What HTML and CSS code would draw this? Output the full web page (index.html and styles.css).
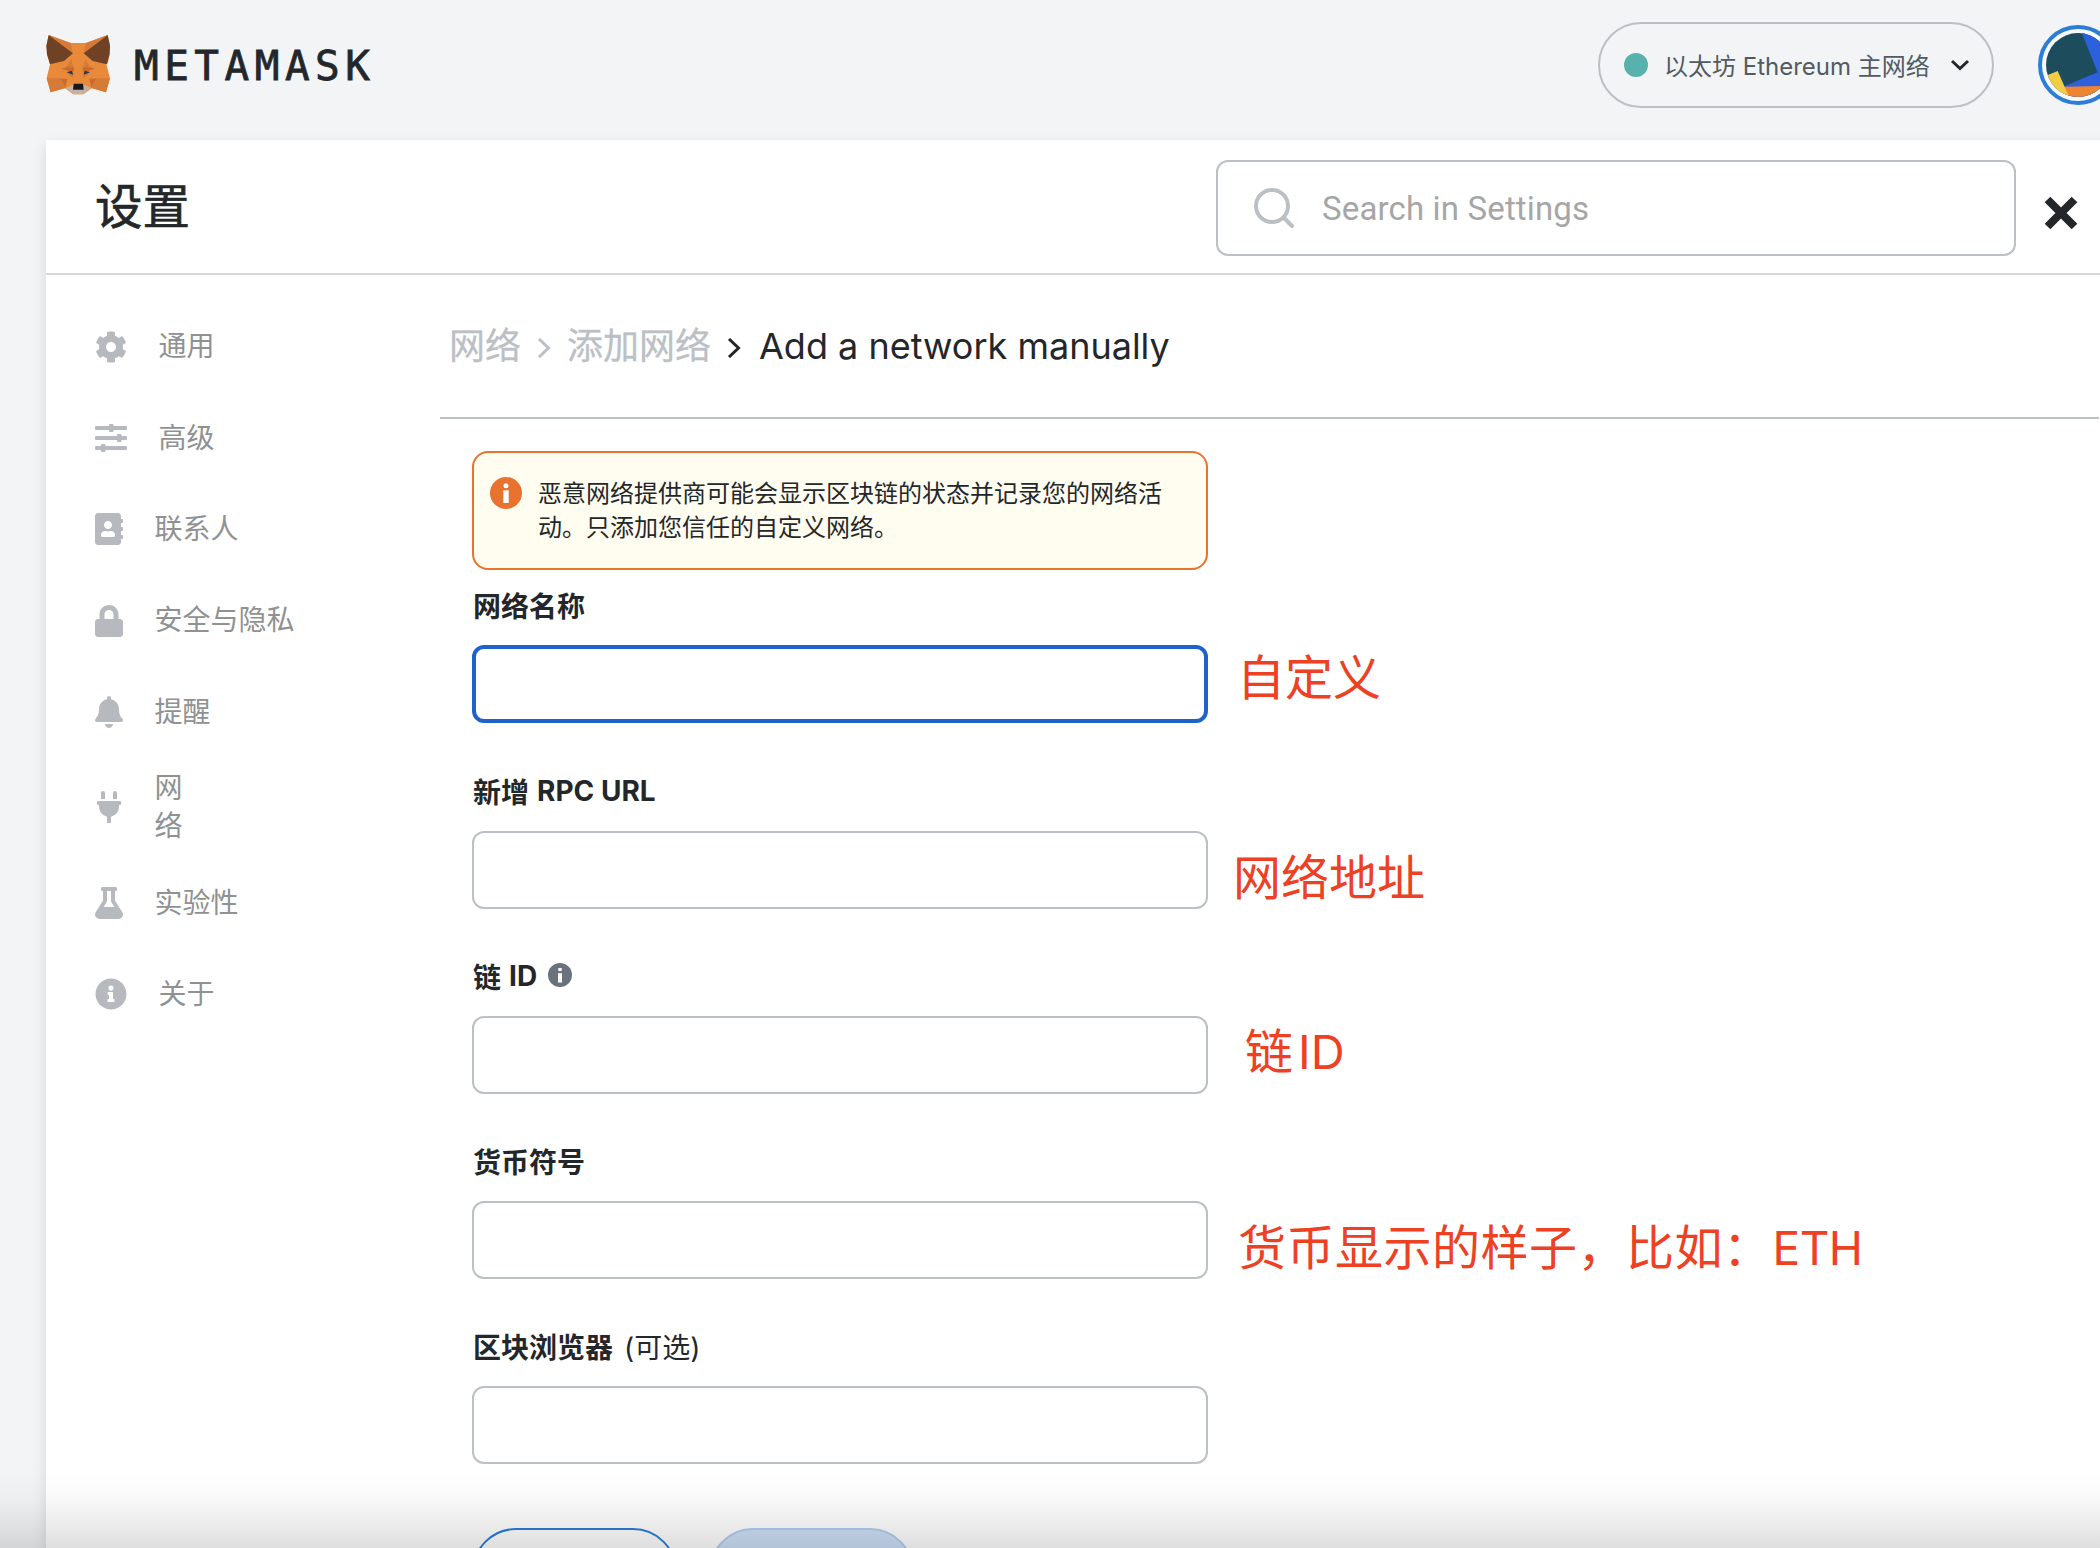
FILE: index.html
```html
<!DOCTYPE html>
<html lang="zh-CN">
<head>
<meta charset="utf-8">
<title>MetaMask</title>
<link rel="stylesheet" href="styles.css">
</head>
<body>
<div class="app">
  <header class="topbar">
    <div class="brand">
      <svg class="fox" viewBox="0 0 228 210">
        <path fill="#e88a3a" d="M26 15 92 39H138L203 15 210 45 204 100 199 102 210 145 198 187 155 175 130 193H100L75 175 32 187 20 145 30 103 19 50Z"/>
        <path fill="#d67a38" d="M26 15 92 39 98 68ZM203 15 138 39 131 68ZM20 145H66L78 173 32 187ZM210 145H163L152 173 198 187ZM78 112 94 88 100 112 100 145 85 132ZM151 112 136 88 130 112 130 145 145 132Z"/>
        <path fill="#cb6a31" d="M64 116 80 112H102V124L84 122ZM166 116 150 112H128V124L146 122ZM62 146H82L76 172ZM168 146H148L154 172Z"/>
        <path fill="#704225" d="M26 15 99 70 72 93 30 103 21 74 19 48ZM203 15 131 70 158 93 200 103 209 74 210 48Z"/>
        <path fill="#263746" d="M80 127 96 122 99 134ZM150 127 134 122 131 134Z"/>
        <path fill="#c5b1a2" d="M77 174 98 164H132L153 174 130 193H100Z"/>
        <path fill="#16181b" d="M101 161H129L131 179H99Z"/>
      </svg>
      <span class="wordmark">METAMASK</span>
    </div>
    <div class="network">
      <span class="dot"></span>
      <span class="network-name">以太坊 <span class="latin">Ethereum</span> 主网络</span>
      <svg class="chevron" viewBox="0 0 20 12"><path d="M2 2 10 9.5 18 2"/></svg>
    </div>
    <div class="account">
      <svg viewBox="0 0 80 80">
        <defs><clipPath id="disc"><circle cx="40" cy="40" r="32"/></clipPath></defs>
        <circle cx="40" cy="40" r="38" fill="#f7f8f9" stroke="#2c7dd6" stroke-width="4"/>
        <g clip-path="url(#disc)">
          <path fill="#1d4d5c" d="M0 0H80V80H0Z"/>
          <path fill="#2d60dc" d="M43.5 7 59.5 47.3 26.3 61.3V80H80V0Z"/>
          <path fill="#ee8330" d="M26.3 61.7 80 60.5V80H20Z"/>
          <path fill="#f0cd44" d="M5 52 19.7 46 32 74 10 80Z"/>
        </g>
      </svg>
    </div>
  </header>

  <main class="panel">
    <div class="panel-head">
      <h1>设置</h1>
      <div class="search">
        <svg class="search-icon" viewBox="0 0 42 42"><circle cx="19" cy="19" r="16"/><path d="M31 31 39 39"/></svg>
        <span>Search in Settings</span>
      </div>
      <svg class="close" viewBox="0 0 34 34"><path d="M3.5 3.5 30.5 30.5M30.5 3.5 3.5 30.5"/></svg>
    </div>
    <div class="panel-body">
      <nav class="tabs">
        <div class="tab">
          <svg class="wide" viewBox="0 0 512 512"><path d="M487.4 315.7l-42.6-24.6c4.3-23.2 4.3-47 0-70.2l42.6-24.6c4.9-2.8 7.1-8.6 5.5-14-11.1-35.6-30-67.8-54.7-94.6-3.8-4.1-10-5.1-14.8-2.3L380.8 110c-17.9-15.4-38.5-27.3-60.8-35.1V25.8c0-5.6-3.9-10.5-9.4-11.7-36.7-8.2-74.3-7.8-109.2 0-5.5 1.2-9.4 6.1-9.4 11.7V75c-22.2 7.9-42.8 19.8-60.8 35.1L88.7 85.5c-4.9-2.8-11-1.9-14.8 2.3-24.7 26.7-43.6 58.9-54.7 94.6-1.7 5.4.6 11.2 5.5 14L67.3 221c-4.3 23.2-4.3 47 0 70.2l-42.6 24.6c-4.9 2.8-7.1 8.6-5.5 14 11.1 35.6 30 67.8 54.7 94.6 3.8 4.1 10 5.1 14.8 2.3l42.6-24.6c17.9 15.4 38.5 27.3 60.8 35.1v49.2c0 5.6 3.9 10.5 9.4 11.7 36.7 8.2 74.3 7.8 109.2 0 5.5-1.2 9.4-6.1 9.4-11.7v-49.2c22.2-7.9 42.8-19.8 60.8-35.1l42.6 24.6c4.9 2.8 11 1.9 14.8-2.3 24.7-26.7 43.6-58.9 54.7-94.6 1.5-5.5-.7-11.3-5.6-14.1zM256 336c-44.1 0-80-35.9-80-80s35.9-80 80-80 80 35.9 80 80-35.9 80-80 80z"/></svg>
          <span>通用</span>
        </div>
        <div class="tab">
          <svg class="wide" viewBox="0 0 32 32"><path d="M1 4H14V3Q14 2 15 2H17.5Q18.5 2 18.5 3V4H31Q32 4 32 5V7Q32 8 31 8H18.5V9Q18.5 10 17.5 10H15Q14 10 14 9V8H1Q0 8 0 7V5Q0 4 1 4ZM1 14H22V13Q22 12 23 12H25.5Q26.5 12 26.5 13V14H31Q32 14 32 15V17Q32 18 31 18H26.5V19Q26.5 20 25.5 20H23Q22 20 22 19V18H1Q0 18 0 17V15Q0 14 1 14ZM1 24H6V23Q6 22 7 22H9.5Q10.5 22 10.5 23V24H31Q32 24 32 25V27Q32 28 31 28H10.5V29Q10.5 30 9.5 30H7Q6 30 6 29V28H1Q0 28 0 27V25Q0 24 1 24Z"/></svg>
          <span>高级</span>
        </div>
        <div class="tab">
          <svg viewBox="0 0 448 512"><path d="M436 160c6.6 0 12-5.4 12-12v-40c0-6.6-5.4-12-12-12h-20V48c0-26.5-21.5-48-48-48H48C21.5 0 0 21.5 0 48v416c0 26.5 21.5 48 48 48h320c26.5 0 48-21.5 48-48v-48h20c6.6 0 12-5.4 12-12v-40c0-6.6-5.4-12-12-12h-20v-64h20c6.6 0 12-5.4 12-12v-40c0-6.6-5.4-12-12-12h-20v-64h20zm-228-32c35.3 0 64 28.7 64 64s-28.7 64-64 64-64-28.7-64-64 28.7-64 64-64zm112 236.8c0 10.6-10 19.2-22.4 19.2H118.4C106 384 96 375.4 96 364.8v-19.2c0-31.8 30.1-57.6 67.2-57.6h5c12.3 5.1 25.7 8 39.8 8s27.6-2.9 39.8-8h5c37.1 0 67.2 25.8 67.2 57.6v19.2z"/></svg>
          <span>联系人</span>
        </div>
        <div class="tab">
          <svg viewBox="0 0 448 512"><path d="M400 224h-24v-72C376 68.2 307.8 0 224 0S72 68.2 72 152v72H48c-26.5 0-48 21.5-48 48v192c0 26.5 21.5 48 48 48h352c26.5 0 48-21.5 48-48V272c0-26.5-21.5-48-48-48zm-104 0H152v-72c0-39.7 32.3-72 72-72s72 32.3 72 72v72z"/></svg>
          <span>安全与隐私</span>
        </div>
        <div class="tab">
          <svg viewBox="0 0 448 512"><path d="M224 512c35.32 0 63.97-28.65 63.97-64H160.03c0 35.35 28.65 64 63.97 64zm215.39-149.71c-19.32-20.76-55.47-51.99-55.47-154.29 0-77.7-54.48-139.9-127.94-155.16V32c0-17.67-14.32-32-31.98-32s-31.98 14.33-31.98 32v20.84C118.56 68.1 64.08 130.3 64.08 208c0 102.3-36.15 133.53-55.47 154.29-6 6.45-8.66 14.16-8.61 21.71.11 16.4 12.98 32 32.1 32h383.8c19.12 0 32-15.6 32.1-32 .05-7.55-2.61-15.27-8.61-21.71z"/></svg>
          <span>提醒</span>
        </div>
        <div class="tab tall">
          <svg viewBox="-32 0 448 512"><path d="M320 32a32 32 0 0 0-64 0v96h64zm48 128H16a16 16 0 0 0-16 16v32a16 16 0 0 0 16 16h16v32a160.070 160.070 0 0 0 128 156.8V512h64v-99.2A160.070 160.070 0 0 0 352 256v-32h16a16 16 0 0 0 16-16v-32a16 16 0 0 0-16-16zM128 32a32 32 0 0 0-64 0v96h64z"/></svg>
          <span>网<br>络</span>
        </div>
        <div class="tab">
          <svg viewBox="0 0 448 512"><path d="M437.2 403.5L320 215V64h8c13.3 0 24-10.7 24-24V24c0-13.3-10.7-24-24-24H120c-13.3 0-24 10.7-24 24v16c0 13.3 10.7 24 24 24h8v151L10.8 403.5C-18.5 450.6 15.3 512 70.9 512h306.2c55.7 0 89.4-61.5 60.1-108.5zM137.9 320l48.2-77.6c3.7-5.2 5.8-11.6 5.8-18.4V64h64v160c0 6.9 2.2 13.2 5.8 18.4l48.2 77.6h-172z"/></svg>
          <span>实验性</span>
        </div>
        <div class="tab">
          <svg class="wide" viewBox="0 0 512 512"><path d="M256 8C119.043 8 8 119.083 8 256c0 136.997 111.043 248 248 248s248-111.003 248-248C504 119.083 392.957 8 256 8zm0 110c23.196 0 42 18.804 42 42s-18.804 42-42 42-42-18.804-42-42 18.804-42 42-42zm56 254c0 6.627-5.373 12-12 12h-88c-6.627 0-12-5.373-12-12v-24c0-6.627 5.373-12 12-12h12v-64h-12c-6.627 0-12-5.373-12-12v-24c0-6.627 5.373-12 12-12h64c6.627 0 12 5.373 12 12v100h12c6.627 0 12 5.373 12 12v24z"/></svg>
          <span>关于</span>
        </div>
      </nav>

      <section class="content">
        <div class="crumbs">
          <span class="muted">网络</span>
          <svg class="sep muted" viewBox="0 0 14 20"><path d="M2 1 11.5 10 2 19"/></svg>
          <span class="muted">添加网络</span>
          <svg class="sep" viewBox="0 0 14 20"><path d="M2 1 11.5 10 2 19"/></svg>
          <span class="current">Add a network manually</span>
        </div>
        <form class="form">
          <div class="warning">
            <svg viewBox="0 0 32 32"><circle cx="16" cy="16" r="16" fill="#e8722e"/><circle cx="16" cy="8.8" r="2.5" fill="#fff"/><path fill="#fff" d="M13.3 13.3H18.7V26H13.3Z"/></svg>
            <p>恶意网络提供商可能会显示区块链的状态并记录您的网络活动。只添加您信任的自定义网络。</p>
          </div>
          <div class="field first">
            <label>网络名称</label>
            <div class="input focused"></div>
            <span class="note note-name">自定义</span>
          </div>
          <div class="field">
            <label>新增 <span class="latin">RPC URL</span></label>
            <div class="input"></div>
            <span class="note note-rpc">网络地址</span>
          </div>
          <div class="field">
            <label>链 <span class="latin">ID</span><svg class="hint" viewBox="0 0 24 24"><circle cx="12" cy="12" r="12" fill="#6a737d"/><path fill="#fff" d="M10.3 5H13.7V8H10.3ZM10 10.3H14V19.5H10Z"/></svg></label>
            <div class="input"></div>
            <span class="note note-chain">链<span class="note-latin">ID</span></span>
          </div>
          <div class="field">
            <label>货币符号</label>
            <div class="input"></div>
            <span class="note note-symbol">货币显示的样子，比如：<span class="note-eth">ETH</span></span>
          </div>
          <div class="field">
            <label class="explorer">区块浏览器 <span class="optional">(可选)</span></label>
            <div class="input"></div>
          </div>
          <div class="actions">
            <div class="button outline"></div>
            <div class="button filled"></div>
          </div>
        </form>
      </section>
    </div>
  </main>
  <div class="fade"></div>
</div>
</body>
</html>
```
FILE: styles.css
```css
* { box-sizing: border-box; }

body {
  margin: 0;
  font-family: Inter, "Noto Sans CJK SC", sans-serif;
  color: #24272a;
}

.app {
  position: relative;
  width: 2100px;
  height: 1548px;
  overflow: hidden;
  background: #f2f4f6;
}

svg { display: block; flex: none; }

.topbar {
  height: 140px;
  display: flex;
  align-items: flex-start;
  padding-top: 22px;
}

.brand {
  display: flex;
  align-items: center;
  gap: 18px;
  margin-left: 40px;
  height: 86px;
}

.fox { width: 76px; height: 70px; }

.wordmark {
  padding-top: 2px;
  font-family: "DejaVu Sans Mono", monospace;
  font-size: 41px;
  line-height: 48px;
  letter-spacing: 5.5px;
  -webkit-text-stroke: .8px #24272a;
}

.network {
  display: flex;
  align-items: center;
  width: 396px;
  height: 86px;
  margin-left: auto;
  padding-left: 24px;
  border: 2px solid #bbc0c5;
  border-radius: 43px;
  color: #535a61;
  font-size: 24px;
}

.network-name { margin: -2px 0 0 16px; width: 265px; white-space: nowrap; }

.dot {
  width: 24px;
  height: 24px;
  border-radius: 50%;
  background: #57b2ad;
}

.chevron { width: 20px; height: 12px; margin-left: 21px; }
.chevron path { fill: none; stroke: #24272a; stroke-width: 3; }

.account { width: 62px; margin: 3px 0 0 44px; }
.account svg { width: 80px; height: 80px; }

.panel {
  width: 2070px;
  height: 1500px;
  margin-left: 46px;
  background: #fff;
  box-shadow: 0 6px 14px rgba(0, 0, 0, .12);
}

.panel-head {
  display: flex;
  align-items: flex-start;
  height: 135px;
  padding: 20px 0 0 49px;
  border-bottom: 2px solid #d6d9dc;
}

h1 {
  margin: 0;
  flex: none;
  width: 1121px;
  font-size: 47.5px;
  font-weight: 400;
  line-height: 93px;
  -webkit-text-stroke: .6px #24272a;
}

.search {
  display: flex;
  align-items: center;
  width: 800px;
  height: 96px;
  padding-left: 35px;
  border: 2px solid #bbc0c5;
  border-radius: 12px;
  color: #a6a6a6;
  font-family: Roboto, sans-serif;
  font-size: 33px;
  letter-spacing: .15px;
}

.search-icon { width: 42px; height: 42px; margin-right: 27px; }
.search-icon * { fill: none; stroke: #bbc0c5; stroke-width: 4; stroke-linecap: round; }

.close { width: 34px; height: 34px; margin: 36px 0 0 28px; }
.close path { stroke: #24272a; stroke-width: 8; }

.panel-body { display: flex; }

.tabs {
  width: 394px;
  flex: none;
  padding: 26px 0 0 48.5px;
  color: #909192;
  font-size: 28px;
  line-height: 38.5px;
}

.tab {
  display: flex;
  align-items: center;
  gap: 32px;
  height: 91.3px;
}

.tab.tall { height: 100px; }
.tab svg { width: 28px; height: 32px; fill: #b6babf; }
.tab svg.wide { width: 32px; }

.content { flex: 1; }

.crumbs {
  display: flex;
  align-items: center;
  width: 1659px;
  height: 144px;
  padding-left: 9px;
  border-bottom: 2px solid #bbc0c5;
  font-size: 36px;
  line-height: 50px;
}

.crumbs .muted { color: #bbc0c5; -webkit-text-stroke: .3px #bbc0c5; }
.sep { width: 14px; height: 20px; margin: 4px 16px 0; }
.sep path { fill: none; stroke: currentColor; stroke-width: 3; }
.current { margin-left: 2px; }

.form { width: 768px; padding: 32px 0 0 32px; }

.warning {
  display: flex;
  width: 736px;
  height: 119px;
  padding: 24px 16px 0;
  background: #fffcf0;
  border: 2px solid #e8722e;
  border-radius: 16px;
}

.warning svg { width: 32px; height: 32px; margin-right: 16px; }

.warning p {
  margin: 0;
  width: 630px;
  font-size: 24px;
  line-height: 34px;
}

.field { position: relative; height: 185px; }
.field.first { height: 186px; }

.field label {
  display: flex;
  align-items: center;
  height: 75px;
  padding: 0 0 5px 1px;
  gap: 8px;
  font-size: 28px;
  font-weight: 700;
}

.field label.explorer { gap: 11px; }
.optional { font-weight: 400; }
.hint { width: 24px; height: 24px; margin-left: 3px; margin-top: -3px; }

.input {
  width: 736px;
  height: 78px;
  border: 2px solid #bbc0c5;
  border-radius: 12px;
}

.input.focused { border: 4px solid #1f62c9; }

/* Red remarks laid over the form */
.note {
  position: absolute;
  color: #ee4023;
  font-size: 48px;
  line-height: 60px;
  white-space: nowrap;
}

.note-name { left: 765px; top: 78px; }
.note-rpc { left: 761px; top: 92px; }
.note-chain { left: 773px; top: 81px; }
.note-symbol { left: 766px; top: 92px; letter-spacing: .5px; }
.note-latin { margin-left: 5px; font-size: 47px; }
.note-eth { margin-left: 1px; font-size: 46px; letter-spacing: -.5px; }

.actions { display: flex; gap: 32px; padding-top: 32px; }

.button { width: 205px; height: 88px; border: 2px solid #2c7dd6; border-radius: 44px; }
.button.filled { border-color: #b0cdef; background: #cde0f7; }

.fade {
  position: absolute;
  left: 0;
  right: 0;
  bottom: 0;
  height: 80px;
  background: linear-gradient(rgba(0, 0, 0, 0), rgba(0, 0, 0, .02) 35%, rgba(0, 0, 0, .075) 70%, rgba(0, 0, 0, .13));
}
```
